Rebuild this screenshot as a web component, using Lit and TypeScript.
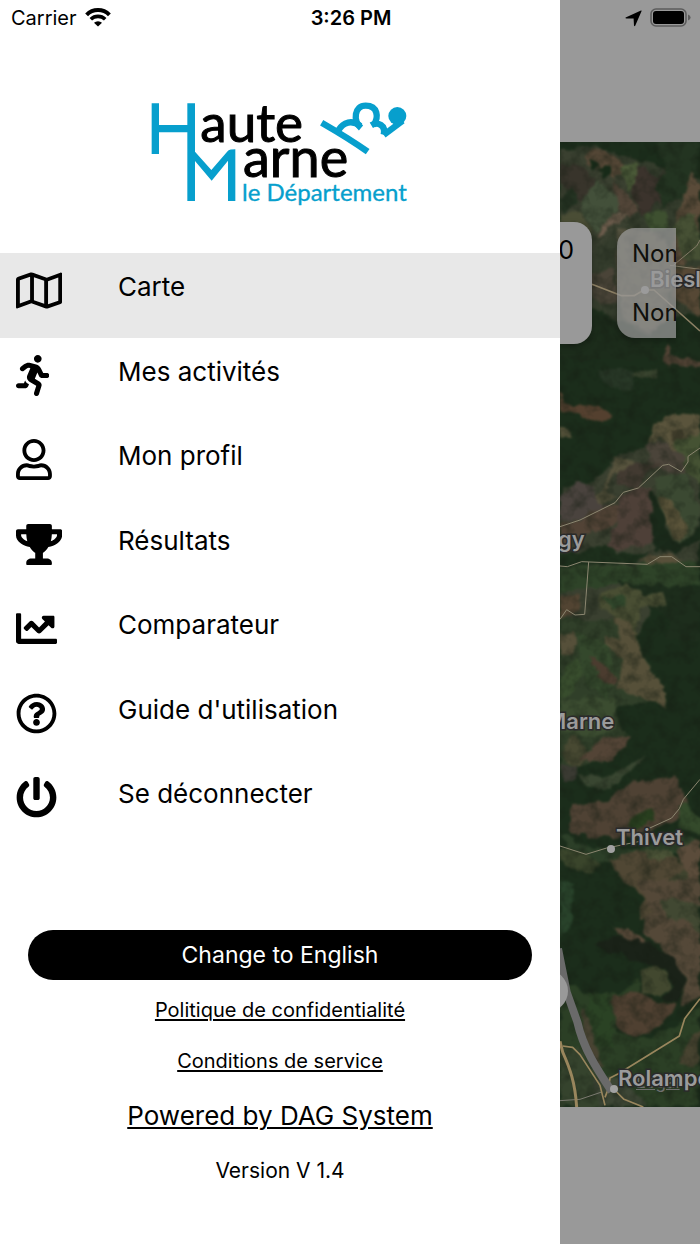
import { LitElement, html, css, svg } from "lit";
import { customElement, state } from "lit/decorators.js";

interface MenuEntry {
  label: string;
  width: number;
  path: string;
}

const MENU: MenuEntry[] = [
  {
    label: "Carte",
    width: 576,
    path: "M560.02 32c-1.96 0-3.98.37-5.96 1.16L384.01 96H384L212 35.28A64.252 64.252 0 0 0 191.76 32c-6.69 0-13.37 1.05-19.81 3.14L20.12 87.95A32.006 32.006 0 0 0 0 117.66v346.32C0 473.17 7.53 480 15.99 480c1.96 0 3.97-.37 5.96-1.16L192 416l172 60.71a63.98 63.98 0 0 0 40.05.15l151.83-52.81A31.996 31.996 0 0 0 576 394.34V48.02c0-9.19-7.53-16.02-15.98-16.02zM224 90.42l128 45.19v285.97l-128-45.19V90.42zM48 418.05V129.07l128-44.53v286.2l-.64.23L48 418.05zm480-35.13l-128 44.53V141.26l.64-.24L528 93.95v288.97z",
  },
  {
    label: "Mes activités",
    width: 416,
    path: "M272 96c26.51 0 48-21.49 48-48S298.51 0 272 0s-48 21.49-48 48 21.49 48 48 48zM113.69 317.47l-14.8 34.52H32c-17.67 0-32 14.33-32 32s14.33 32 32 32h77.45c19.25 0 36.58-11.44 44.11-29.09l8.79-20.52-10.67-6.3c-17.32-10.23-30.06-25.37-37.99-42.61zM384 223.99h-44.03l-26.06-53.25c-12.5-25.55-35.45-44.23-61.78-50.94l-71.08-21.14c-28.3-6.8-57.77-.55-80.84 17.14l-39.67 30.41c-14.03 10.75-16.69 30.83-5.94 44.86s30.84 16.66 44.86 5.94l39.69-30.41c7.67-5.89 17.44-8 25.27-6.14l14.7 4.37-37.46 87.39c-12.62 29.48-1.31 64.01 26.3 80.31l84.98 50.17-27.47 87.73c-5.28 16.86 4.11 34.81 20.97 40.09 3.19 1 6.41 1.48 9.58 1.48 13.61 0 26.23-8.77 30.52-22.45l31.64-101.06c5.91-20.77-2.89-43.08-21.64-54.39l-61.24-36.14 31.31-78.28 20.27 41.43c8 16.34 24.92 26.89 43.11 26.89H384c17.67 0 32-14.33 32-32s-14.33-31.99-32-31.99z",
  },
  {
    label: "Mon profil",
    width: 448,
    path: "M313.6 304c-28.7 0-42.5 16-89.6 16-47.1 0-60.8-16-89.6-16C60.2 304 0 364.2 0 438.4V464c0 26.5 21.5 48 48 48h352c26.5 0 48-21.5 48-48v-25.6c0-74.2-60.2-134.4-134.4-134.4zM400 464H48v-25.6c0-47.6 38.8-86.4 86.4-86.4 14.6 0 38.3 16 89.6 16 51.7 0 74.9-16 89.6-16 47.6 0 86.4 38.8 86.4 86.4V464zM224 288c79.5 0 144-64.5 144-144S303.5 0 224 0 80 64.5 80 144s64.5 144 144 144zm0-240c52.9 0 96 43.1 96 96s-43.1 96-96 96-96-43.1-96-96 43.1-96 96-96z",
  },
  {
    label: "Résultats",
    width: 576,
    path: "M552 64H448V24c0-13.3-10.7-24-24-24H152c-13.3 0-24 10.7-24 24v40H24C10.7 64 0 74.7 0 88v56c0 35.7 22.5 72.4 61.9 100.7 31.5 22.7 69.8 37.1 110 41.7C203.3 338.5 240 360 240 360v72h-48c-35.3 0-64 20.7-64 56v12c0 6.6 5.4 12 12 12h296c6.6 0 12-5.4 12-12v-12c0-35.3-28.7-56-64-56h-48v-72s36.7-21.5 68.1-73.6c40.3-4.6 78.6-19 110-41.7 39.3-28.3 61.9-65 61.9-100.7V88c0-13.3-10.7-24-24-24zM99.3 192.8C74.9 175.2 64 155.6 64 144v-16h64.2c1 32.6 5.8 61.2 12.8 86.2-15.1-5.2-29.2-12.4-41.7-21.4zM512 144c0 16.1-17.7 36.1-35.3 48.8-12.5 9-26.7 16.2-41.8 21.4 7-25 11.8-53.6 12.8-86.2H512v16z",
  },
  {
    label: "Comparateur",
    width: 512,
    path: "M496 384H64V80c0-8.84-7.16-16-16-16H16C7.16 64 0 71.16 0 80v336c0 17.67 14.33 32 32 32h464c8.84 0 16-7.16 16-16v-32c0-8.84-7.16-16-16-16zM464 96H345.94c-21.38 0-32.09 25.85-16.97 40.97l32.4 32.4L288 242.75l-73.37-73.37c-12.5-12.5-32.76-12.5-45.25 0l-68.69 68.69c-6.25 6.25-6.25 16.38 0 22.63l22.62 22.62c6.25 6.25 16.38 6.25 22.63 0L192 237.25l73.37 73.37c12.5 12.5 32.76 12.5 45.25 0l96-96 32.4 32.4c15.12 15.12 40.97 4.41 40.97-16.97V112c.01-8.84-7.15-16-15.99-16z",
  },
  {
    label: "Guide d'utilisation",
    width: 512,
    path: "M256 8C119.043 8 8 119.083 8 256c0 136.997 111.043 248 248 248s248-111.003 248-248C504 119.083 392.957 8 256 8zm0 448c-110.532 0-200-89.431-200-200 0-110.495 89.472-200 200-200 110.491 0 200 89.471 200 200 0 110.53-89.431 200-200 200zm107.244-255.2c0 67.052-72.421 68.084-72.421 92.863V300c0 6.627-5.373 12-12 12h-45.647c-6.627 0-12-5.373-12-12v-8.659c0-35.745 27.1-50.034 47.579-61.516 17.561-9.845 28.324-16.541 28.324-29.579 0-17.246-21.999-28.693-39.784-28.693-23.189 0-33.894 10.977-48.942 29.969-4.057 5.12-11.46 6.071-16.666 2.124l-27.824-21.098c-5.107-3.872-6.251-11.066-2.644-16.363C184.846 131.491 214.94 112 261.794 112c49.071 0 101.45 38.304 101.45 88.8zM298 368c0 23.159-18.841 42-42 42s-42-18.841-42-42 18.841-42 42-42 42 18.841 42 42z",
  },
  {
    label: "Se déconnecter",
    width: 512,
    path: "M400 54.1c63 45 104 118.6 104 201.9 0 136.8-110.8 247.7-247.5 248C120 504.3 8.2 393 8 256.4 7.9 173.1 48.9 99.3 111.8 54.2c11.7-8.3 28-4.8 35 7.7L162.6 90c5.9 10.5 3.1 23.8-6.6 31-41.5 30.8-68 79.6-68 134.9-.1 92.3 74.5 168.1 168 168.1 91.6 0 168.6-74.2 168-169.1-.3-51.8-24.7-101.8-68.1-134-9.7-7.2-12.4-20.5-6.5-30.9l15.8-28.1c7-12.4 23.2-16.1 34.8-7.8zM296 264V24c0-13.3-10.7-24-24-24h-32c-13.3 0-24 10.7-24 24v240c0 13.3 10.7 24 24 24h32c13.3 0 24-10.7 24-24z",
  },
];

/* Land parcels as [fill, points], grouped by vertical tile of the map. */
type Parcel = [string, string];

const TILES: { y: number; parcels: Parcel[] }[] = [
  {
    y: -426,
    parcels: [
      ["#343c2c", "30,450 140,440 260,480 340,500 450,540 450,940 340,960 300,1010 200,960 30,880"],
      ["#3a4030", "30,440 110,470 150,440 215,490 270,560 280,640 200,690 120,760 30,700"],
      ["#554736", "100,470 150,445 215,480 222,520 190,540 150,510 110,495"],
      ["#43503a", "140,540 215,600 190,650 140,700 95,640 95,600"],
      ["#4b5a38", "212,500 262,485 272,560 238,575"],
      ["#38342b", "30,490 100,500 140,540 95,600 50,570 30,540"],
      ["#524538", "190,540 225,570 268,640 240,660 205,620"],
      ["#3b332c", "262,495 330,530 350,500 395,540 385,600 320,610 275,650 245,580"],
      ["#243322", "30,600 70,560 85,600 40,640"],
      ["#4a4d35", "30,640 90,640 130,690 120,740 30,690"],
      ["#233421", "320,426 450,426 450,520 420,560 400,590 340,620 320,560 350,500"],
      ["#5a4b39", "400,580 425,520 450,560 450,720 400,800 365,790 370,700"],
      ["#465034", "365,690 400,640 430,640 450,700 450,780 400,780"],
      ["#564835", "365,810 450,800 450,950 400,920 370,880"],
      ["#3e5030", "280,640 340,630 360,680 300,700"],
      ["#4a4438", "120,820 190,810 200,910 160,920 125,880"],
      ["#54523f", "200,680 340,700 370,800 350,960 300,1000 220,960 200,850"],
      ["#1c2c1b", "30,920 130,930 210,970 300,1020 330,1080 30,1080"],
      ["#172a18", "115,480 145,485 150,505 125,508"],
      ["#172a18", "148,505 180,500 182,525 160,540"],
      ["#6c5c4c", "145,700 205,630 235,640 225,655 190,670 150,715"],
    ],
  },
  {
    y: 594,
    parcels: [
      ["#3a4030", "450,230 340,240 290,320 200,350 130,430 40,440 30,560 30,900 260,900 300,800 380,720 450,700"],
      ["#54402f", "30,150 50,190 100,200 145,195 185,240 130,245 90,225 30,215"],
      ["#55523a", "30,260 65,265 60,290 30,290"],
      ["#504234", "340,15 355,10 365,50 450,60 450,80 340,75"],
      ["#3a452f", "240,95 325,90 325,115 250,115"],
      ["#283827", "145,90 250,90 250,150 160,130"],
      ["#5a543c", "310,250 360,220 450,230 450,320 360,330 340,290 300,305"],
      ["#3d3a29", "355,270 400,265 405,300 365,305"],
      ["#455233", "370,310 450,280 450,440 400,380"],
      ["#4b443a", "285,310 330,300 400,350 410,400 350,400 300,360"],
      ["#57533d", "200,350 245,360 250,385 190,400 175,450 200,470 150,500 130,480 165,450 175,390"],
      ["#423a31", "200,390 250,370 330,370 260,440 200,440"],
      ["#4a433e", "80,425 130,440 140,490 180,500 30,555 30,480"],
      ["#524336", "30,560 200,490 220,510 170,570 120,580 30,610"],
      ["#4e4038", "210,470 260,440 305,445 312,605 160,640 185,590"],
      ["#3b4932", "310,410 410,400 445,500 445,560 390,615 350,560 325,480"],
      ["#5a5339", "330,470 365,485 420,570 390,605 345,550"],
      ["#1a2a1a", "300,450 325,470 345,560 390,612 450,560 450,600 380,640 310,630"],
      ["#1d2f1c", "30,640 170,620 200,640 300,640 260,670 30,680"],
      ["#58503a", "270,665 330,638 370,645 400,680 300,685"],
      ["#2e4328", "30,680 450,670 450,730 350,750 200,730 120,740 30,760"],
      ["#1d2d1c", "200,725 330,735 450,740 450,900 340,900 360,840 270,780"],
      ["#524432", "30,770 85,765 90,810 50,830 30,850"],
      ["#494e33", "150,760 230,730 280,760 340,760 350,800 270,800 260,870 265,900 235,900 190,830 150,810"],
      ["#30462b", "160,770 220,770 225,805 190,810"],
      ["#34472c", "30,840 100,830 140,900 30,900"],
      ["#504737", "30,875 75,880 80,900 30,900"],
    ],
  },
  {
    y: 1434,
    parcels: [
      ["#303f29", "30,0 240,0 290,130 350,230 200,270 230,350 180,420 30,450"],
      ["#56503a", "30,40 75,40 75,100 30,105"],
      ["#34482c", "80,40 170,70 200,180 170,230 120,200 90,150"],
      ["#384d2d", "30,170 80,110 95,160 70,210 30,240"],
      ["#565039", "190,0 240,0 270,80 290,140 340,200 350,260 260,225 200,200 220,120 165,70 165,50 210,60"],
      ["#4b3c2f", "110,110 160,130 205,180 190,195 150,170"],
      ["#3b4c30", "30,240 200,230 190,290 200,330 120,350 30,330"],
      ["#484932", "40,370 80,340 120,400 90,440 50,430"],
      ["#534436", "90,410 120,390 160,350 240,355 190,420 110,430"],
      ["#3a3a32", "30,430 80,440 85,480 40,480"],
      ["#394631", "85,460 180,470 285,405 275,430 180,500 110,500"],
      ["#4f4234", "60,555 160,550 240,485 320,480 375,460 405,540 385,590 300,640 190,655 60,640"],
      ["#29401f", "240,600 310,565 310,600 280,620 245,625"],
      ["#344a2b", "385,570 400,540 450,600 450,640 390,620"],
      ["#2c3f28", "30,640 120,680 260,690 390,640 450,660 450,700 300,700 180,730 60,720"],
      ["#5b4c3b", "380,690 450,650 450,820 400,760"],
      ["#3a452b", "30,690 110,700 160,740 110,760 30,720"],
      ["#504734", "180,720 270,695 380,710 395,740 450,830 450,900 270,900 280,830 215,780"],
      ["#4b5337", "285,690 360,690 375,715 300,720"],
      ["#3f432e", "350,780 400,750 450,840 450,870 360,850"],
      ["#20361d", "30,820 60,810 60,900 30,880"],
    ],
  },
  {
    y: 2214,
    parcels: [
      ["#28422a", "30,0 70,10 65,130 30,170"],
      ["#544838", "265,0 450,0 450,350 395,380 405,300 330,190 280,170 290,110 310,90 270,30"],
      ["#414832", "330,60 410,60 450,80 450,160 400,120 350,110"],
      ["#5a4a3a", "190,145 220,140 290,190 240,190"],
      ["#2b3f25", "110,340 200,340 270,300 270,350 190,360 200,460 300,480 400,420 450,370 450,680 30,680 30,300"],
      ["#4f4031", "190,345 270,335 330,370 380,375 330,440 270,465 220,460 190,410"],
      ["#1a2218", "130,190 200,170 300,190 370,230 405,310 385,370 330,360 370,320 350,270 290,245 180,220"],
      ["#42482f", "275,270 320,255 355,285 362,325 330,350 275,335"],
      ["#484332", "95,380 120,400 135,500 160,560 140,560 105,490"],
      ["#2a4224", "120,340 180,350 190,500 140,480 110,400"],
      ["#474330", "385,555 430,460 450,450 450,560"],
      ["#35432d", "30,500 90,510 150,600 150,680 30,680"],
      ["#3d4635", "130,600 200,590 280,660 290,680 150,680"],
    ],
  },
];

/* Roads as [stroke, width, path]. */
const ROADS: [string, number, string][] = [
  ["#8d8065", 5, "M96 427 L185 461 H222 L252 444 H282 L420 567"],
  ["#827a66", 3, "M340 370 L410 312 L420 294 M330 370 L420 382"],
  ["#8b8670", 3, "M0 1154 L60 1134 L165 1082 L190 1051 L235 1038 L308 970 L326 967 L364 989 L384 960 V943 L420 918"],
  ["#8b8670", 3, "M0 1272 L22 1274 L65 1259 L262 1267 L300 1244 H335 L378 1274 H420"],
  ["#8b8670", 3, "M86 1260 L74 1417 L45 1419 L20 1403 L0 1432"],
  ["#8b8670", 3, "M0 2112 L78 2137 L140 2118 L240 2098 L265 2060 L335 2028 L358 2000 L370 1972 L420 1912"],
  ["#7b7a70", 3, "M0 2876 L60 2872 L125 2850"],
  ["#99865d", 9, "M0 2698 L8 2730 C30 2780 45 2820 50 2895"],
  ["#99865d", 5, "M8 2712 L38 2716 L60 2738 L120 2830 L135 2890 M135 2866 L145 2840 L150 2808 L175 2795 L358 2682 L374 2630 L420 2570 M170 2850 L192 2872 L250 2895"],
  ["#6a6a6a", 24, "M-6 2420 L20 2550 L52 2640 C70 2720 110 2780 155 2848"],
];

@customElement("map-view")
export class MapView extends LitElement {
  static styles = css`
    :host {
      display: block;
      position: relative;
      overflow: hidden;
      background: #1b2e1b;
    }
    .ground {
      display: block;
      width: 100%;
      height: 100%;
    }
    .place {
      position: absolute;
      font-size: 22px;
      line-height: 26px;
      font-weight: 600;
      color: #9b9b9b;
      white-space: nowrap;
      -webkit-text-stroke: 3px #2a2a2a;
      paint-order: stroke fill;
    }
    .biesles { left: 90px; top: 124px; }
    .gy { left: -2px; top: 384px; }
    .marne { left: -14px; top: 566px; }
    .thivet { left: 56px; top: 682px; }
    .rolampont { left: 58px; top: 923px; }
    .legal {
      position: absolute;
      left: 76px;
      top: 930px;
      font-size: 17px;
      line-height: 20px;
      color: #6f6f6f;
    }
    .dot {
      position: absolute;
      width: 8px;
      height: 8px;
      border-radius: 50%;
      background: #a2a2a2;
    }
    .dot-biesles { left: 81px; top: 144px; }
    .dot-thivet { left: 47px; top: 703px; }
    .dot-rolampont { left: 50px; top: 943px; }
    .counter,
    .names {
      position: absolute;
      box-sizing: border-box;
      font-size: 25px;
      line-height: 30px;
      color: #000;
      box-shadow: 0 3px 6px #0004;
    }
    .counter {
      left: -40px;
      top: 80px;
      width: 72px;
      height: 122px;
      padding: 13px 18px;
      text-align: right;
      border-radius: 18px;
      background: #999;
    }
    .names {
      left: 57px;
      top: 86px;
      width: 59px;
      height: 110px;
      padding: 11px 0 10px 15px;
      display: flex;
      flex-direction: column;
      justify-content: space-between;
      overflow: hidden;
      border-radius: 18px 0 0 18px;
      background: #999b;
      color: #10100c;
      font-size: 24px;
    }
    .round {
      position: absolute;
      left: -34px;
      top: 828px;
      width: 42px;
      height: 42px;
      border-radius: 50%;
      background: #999;
    }
  `;

  render() {
    return html`
      <svg class="ground" viewBox="0 0 420 2895" preserveAspectRatio="xMinYMin slice" aria-hidden="true">
        <defs>
          <filter id="terrain" x="0" y="0" width="100%" height="100%" color-interpolation-filters="sRGB">
            <feTurbulence type="fractalNoise" baseFrequency="0.025" numOctaves="3" seed="7" result="noise" />
            <feDisplacementMap
              in="SourceGraphic"
              in2="noise"
              scale="30"
              xChannelSelector="R"
              yChannelSelector="G"
              result="bent"
            />
            <feGaussianBlur in="bent" stdDeviation="3" result="soft" />
            <feColorMatrix
              in="noise"
              values="0 0 0 0 0.08  0 0 0 0 0.11  0 0 0 0 0.07  1 0 0 0 -0.4"
              result="shade"
            />
            <feMerge><feMergeNode in="soft" /><feMergeNode in="shade" /></feMerge>
          </filter>
        </defs>
        <g filter="url(#terrain)">
          <rect x="-40" y="-40" width="520" height="2980" fill="#1b2d1b" />
          ${TILES.map(
            (tile) => svg`<g transform=${`translate(-30 ${tile.y})`}>
              ${tile.parcels.map(([fill, points]) => svg`<polygon fill=${fill} points=${points} />`)}
            </g>`
          )}
        </g>
        ${ROADS.map(
          ([stroke, width, d]) =>
            svg`<path d=${d} fill="none" stroke=${stroke} stroke-width=${width} stroke-linejoin="round" />`
        )}
      </svg>
      <span class="dot dot-biesles"></span>
      <span class="place biesles">Biesles</span>
      <span class="place gy">gy</span>
      <span class="place marne">Marne</span>
      <span class="dot dot-thivet"></span>
      <span class="place thivet">Thivet</span>
      <span class="dot dot-rolampont"></span>
      <span class="legal"><u>Legal</u></span>
      <span class="place rolampont">Rolampont</span>
      <div class="counter">0</div>
      <div class="names"><span>Nom</span><span>Nom</span></div>
      <div class="round"></div>
    `;
  }
}

@customElement("app-root")
export class AppRoot extends LitElement {
  @state() private selected = 0;

  static styles = css`
    :host {
      display: grid;
      grid-template-columns: 4fr 1fr;
      grid-template-rows: 36px 1fr;
      min-height: 100vh;
      font-family: Inter, "Liberation Sans", sans-serif;
      color: #000;
      background: #fff;
    }
    .status {
      grid-area: 1 / 1 / 2 / 3;
      z-index: 1;
      display: grid;
      grid-template-columns: 1fr auto 1fr;
      align-items: center;
      padding: 0 9px 0 11px;
      font-size: 20px;
      line-height: 24px;
    }
    .carrier,
    .indicators {
      display: flex;
      align-items: center;
      gap: 8px;
    }
    .indicators {
      justify-content: flex-end;
    }
    .time {
      font-weight: 600;
    }
    .drawer {
      grid-area: 1 / 1 / 3 / 2;
      display: flex;
      flex-direction: column;
      padding-top: 90px;
    }
    .logo {
      align-self: center;
      width: 280px;
      height: 130px;
      margin-bottom: 33px;
    }
    .logo text {
      font-family: Lato, sans-serif;
    }
    .menu {
      display: grid;
      grid-auto-rows: 1fr;
      min-height: 592px;
    }
    .entry {
      display: grid;
      grid-template-columns: 102px 1fr;
      align-items: start;
      padding: 17px 16px;
      border: 0;
      background: none;
      color: inherit;
      font: inherit;
      font-size: 26px;
      line-height: 34px;
      text-align: left;
      cursor: pointer;
    }
    .entry[aria-current="page"] {
      background: #e8e8e8;
    }
    .glyph {
      display: block;
      height: 41px;
    }
    .foot {
      display: flex;
      flex-direction: column;
      align-items: center;
      padding: 85px 28px 56px;
      font-size: 20px;
      line-height: 24px;
    }
    .language {
      align-self: stretch;
      height: 50px;
      margin-bottom: 18px;
      border: 0;
      border-radius: 25px;
      background: #000;
      color: #fff;
      font: inherit;
      font-size: 23px;
      cursor: pointer;
    }
    .foot a {
      color: inherit;
      margin-bottom: 27px;
      text-underline-offset: 2px;
      text-decoration-thickness: 2px;
    }
    .foot .powered {
      font-size: 26px;
      line-height: 32px;
    }
    .version {
      font-size: 21px;
    }
    .behind {
      grid-area: 1 / 2 / 3 / 3;
      display: flex;
      flex-direction: column;
      min-width: 0;
      padding: 142px 0 137px;
      background: #999;
    }
    .behind map-view {
      flex: 1;
      height: 0;
    }
  `;

  render() {
    return html`
      <header class="status">
        <div class="carrier">
          <span>Carrier</span>
          <svg width="26" height="20" viewBox="0 0 26 20" aria-label="Wi-Fi">
            <path d="M1.6 6.8 A16 16 0 0 1 24.4 6.8" fill="none" stroke="#000" stroke-width="4" />
            <path d="M5.8 11.3 A10.4 10.4 0 0 1 20.2 11.3" fill="none" stroke="#000" stroke-width="3.6" />
            <path d="M13 18.6 L9 14.8 A6 6 0 0 1 17 14.8 Z" />
          </svg>
        </div>
        <span class="time">3:26 PM</span>
        <div class="indicators">
          <svg width="17" height="17" viewBox="0 0 17 17" aria-label="Location">
            <path d="M16 0.6 Q16.8 0.2 16.5 1.2 L10.2 15.8 Q9.4 16.8 9 15.4 L8.6 8.6 L1.4 8.6 Q-0.4 8 1.2 7.2 Z" />
          </svg>
          <svg width="41" height="20" viewBox="0 0 41 20" aria-label="Battery">
            <rect x="1" y="1" width="35" height="17" rx="5" fill="none" stroke="#5c5c5c" stroke-width="1.6" />
            <rect x="3" y="3" width="31" height="13" rx="3" />
            <path d="M38 6.5 Q40.6 7.4 40.6 9.5 Q40.6 11.6 38 12.5 Z" fill="#5c5c5c" />
          </svg>
        </div>
      </header>

      <aside class="drawer">
        <svg class="logo" viewBox="0 0 840 390" role="img" aria-label="Haute Marne le Département">
          <g fill="#079fcd">
            <path d="M35 40 H57 V105 H142 V40 H165 V185 L214 240 L264 182 Q270 178 286 178 V333 H264 V212 L215 272 L165 213 V333 H142 V127 H57 V192 H35 Z" />
            <circle cx="772" cy="78" r="27" />
          </g>
          <g fill="none" stroke="#079fcd" stroke-width="19">
            <path d="M545 98 C590 124 640 154 683 185" />
            <path d="M595 121 C610 96 636 88 661 108" />
            <path d="M663 114 C638 92 643 47 677 47 C713 47 718 82 700 106" />
            <path d="M694 106 C714 94 738 106 731 134" />
            <path d="M731 135 L788 92" />
          </g>
          <g stroke="#000" stroke-width="3">
            <text x="181" y="155" font-size="159">aute</text>
            <text x="309" y="262" font-size="162">arne</text>
          </g>
          <text x="306" y="333" font-size="72" fill="#079fcd" stroke="#079fcd">le Département</text>
        </svg>

        <nav class="menu">
          ${MENU.map(
            (entry, i) => html`
              <button
                class="entry"
                aria-current=${i === this.selected ? "page" : "false"}
                @click=${() => (this.selected = i)}
              >
                <svg class="glyph" viewBox="0 0 ${entry.width} 512" aria-hidden="true">
                  <path d=${entry.path} />
                </svg>
                <span>${entry.label}</span>
              </button>
            `
          )}
        </nav>

        <footer class="foot">
          <button class="language">Change to English</button>
          <a href="#confidentialite">Politique de confidentialité</a>
          <a href="#conditions">Conditions de service</a>
          <a class="powered" href="#dag">Powered by DAG System</a>
          <span class="version">Version V 1.4</span>
        </footer>
      </aside>

      <main class="behind">
        <map-view></map-view>
      </main>
    `;
  }
}
